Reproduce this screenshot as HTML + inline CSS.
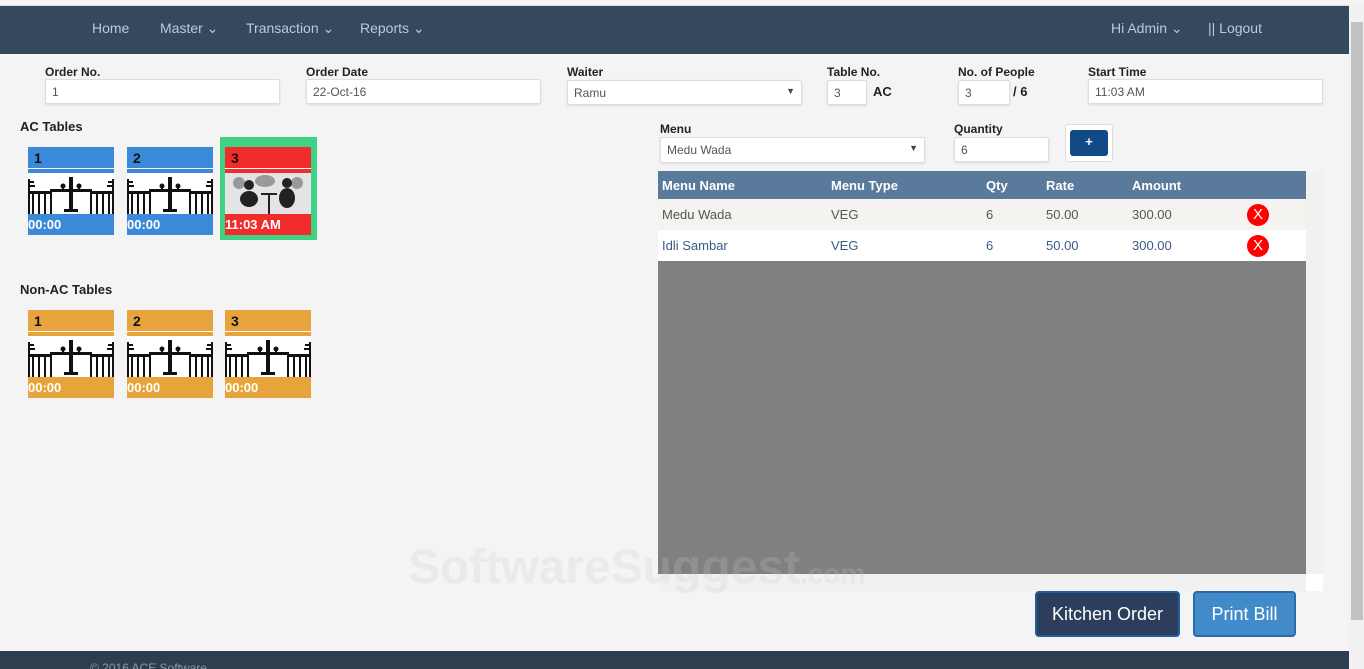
<!DOCTYPE html>
<html style="overflow:hidden"><head><meta charset="utf-8"><style>
*{box-sizing:border-box;margin:0;padding:0}
body{width:1364px;height:669px;overflow:hidden;background:#f4f4f4;font-family:"Liberation Sans",sans-serif;position:relative;font-size:13px;color:#333}
.a{position:absolute}
.nav{left:0;top:5px;width:1349px;height:49px;background:#34495e;border-top:1px solid #ddd}
.nav span{position:absolute;top:14px;color:#b9cbdc;font-size:14px}
.lbl{font-size:12px;font-weight:bold;color:#222}
.inp{background:#fff;border:1px solid #ddd;border-radius:2px;height:25px;font-size:12px;color:#555;padding:5px 6px;box-shadow:0 1px 2px rgba(0,0,0,.1)}
.tile{width:86px;height:88px;overflow:hidden}
.tile .h{height:21px;font-weight:bold;font-size:14px;padding:3px 6px;color:#111}
.tile .ln{height:1px;background:#fff}
.tile .g{height:4px}
.tile .img{height:41px;background:#fff;overflow:hidden}
.tile .f{height:21px;color:#fff;font-weight:bold;font-size:13px;padding:3px 0}
.blue{background:#3b89d9}.org{background:#e8a43c}.red{background:#f22b2b}
table{border-collapse:collapse;width:648px;font-size:13px}
th{background:#5a7a9c;color:#fff;text-align:left;height:28px;padding-left:4px;font-size:13px}
td{height:31px;padding-left:4px}
.x{width:22px;height:22px;border-radius:50%;background:#f00;color:#fff;text-align:center;line-height:22px;font-size:15px}
</style></head><body>
<svg width="0" height="0" style="position:absolute"><defs><g id="tb"><g fill="#111"><path d="M0 6h2v35H0zM0 18h24v3H0zM4 21h2v20H4zM10 21h2v20h-2zM16 21h2v20h-2zM22 18h2v23h-2zM2 8h4v2H2zM2 12h5v2H2z"/><path d="M84 6h2v35h-2zM62 18h24v3H62zM80 21h2v20h-2zM74 21h2v20h-2zM68 21h2v20h-2zM62 18h2v23h-2zM80 8h4v2h-4zM79 12h5v2h-5z"/><path d="M22 16h42v3H22zM41 4h4v32h-4zM36 36h14v3H36z"/><circle cx="35" cy="13" r="2.5"/><circle cx="51" cy="13" r="2.5"/><path d="M34 13h2v4h-2zM50 13h2v4h-2z"/></g></g></defs></svg>
<div class="a nav">
<span style="left:92px">Home</span><span style="left:160px">Master ⌄</span><span style="left:246px">Transaction ⌄</span><span style="left:360px">Reports ⌄</span>
<span style="left:1111px">Hi Admin ⌄</span><span style="left:1208px">|| Logout</span>
</div>
<div class="a" style="left:1349px;top:5px;width:15px;height:664px;background:#f1f1f1"></div>
<div class="a" style="left:1351px;top:22px;width:12px;height:598px;background:#c1c1c1"></div>

<div class="a lbl" style="left:45px;top:65px">Order No.</div><div class="a inp" style="left:45px;top:79px;width:235px">1</div>
<div class="a lbl" style="left:306px;top:65px">Order Date</div><div class="a inp" style="left:306px;top:79px;width:235px">22-Oct-16</div>
<div class="a lbl" style="left:567px;top:65px">Waiter</div><div class="a inp" style="left:567px;top:80px;width:235px">Ramu<span style="float:right;font-size:9px;color:#444">▼</span></div>
<div class="a lbl" style="left:827px;top:65px">Table No.</div><div class="a inp" style="left:827px;top:80px;width:40px">3</div><div class="a lbl" style="left:873px;top:84px;font-size:13px">AC</div>
<div class="a lbl" style="left:958px;top:65px">No. of People</div><div class="a inp" style="left:958px;top:80px;width:52px">3</div><div class="a lbl" style="left:1013px;top:84px;font-size:13px">/ 6</div>
<div class="a lbl" style="left:1088px;top:65px">Start Time</div><div class="a inp" style="left:1088px;top:79px;width:235px">11:03 AM</div>

<div class="a lbl" style="left:20px;top:119px;font-size:13px">AC Tables</div>
<div class="a" style="left:220px;top:137px;width:97px;height:103px;background:#3fd184"></div>
<div class="a tile" style="left:28px;top:147px"><div class="h blue">1</div><div class="ln"></div><div class="g blue"></div><div class="img"><svg width="86" height="41"><use href="#tb"/></svg></div><div class="f blue">00:00</div></div>
<div class="a tile" style="left:127px;top:147px"><div class="h blue">2</div><div class="ln"></div><div class="g blue"></div><div class="img"><svg width="86" height="41"><use href="#tb"/></svg></div><div class="f blue">00:00</div></div>
<div class="a tile" style="left:225px;top:147px"><div class="h red">3</div><div class="ln"></div><div class="g red"></div><div class="img" style="background:#e4e4e4"><svg width="86" height="41"><g fill="#999"><circle cx="14" cy="10" r="6"/><circle cx="72" cy="10" r="6"/><ellipse cx="40" cy="8" rx="10" ry="6"/></g><g fill="#222"><circle cx="24" cy="12" r="5"/><ellipse cx="24" cy="26" rx="9" ry="8"/><circle cx="62" cy="10" r="5"/><ellipse cx="62" cy="25" rx="8" ry="10"/><rect x="36" y="20" width="16" height="2"/><rect x="43" y="20" width="2" height="21"/></g></svg></div><div class="f red">11:03 AM</div></div>

<div class="a lbl" style="left:20px;top:282px;font-size:13px">Non-AC Tables</div>
<div class="a tile" style="left:28px;top:310px"><div class="h org">1</div><div class="ln"></div><div class="g org"></div><div class="img"><svg width="86" height="41"><use href="#tb"/></svg></div><div class="f org">00:00</div></div>
<div class="a tile" style="left:127px;top:310px"><div class="h org">2</div><div class="ln"></div><div class="g org"></div><div class="img"><svg width="86" height="41"><use href="#tb"/></svg></div><div class="f org">00:00</div></div>
<div class="a tile" style="left:225px;top:310px"><div class="h org">3</div><div class="ln"></div><div class="g org"></div><div class="img"><svg width="86" height="41"><use href="#tb"/></svg></div><div class="f org">00:00</div></div>

<div class="a lbl" style="left:660px;top:122px">Menu</div><div class="a inp" style="left:660px;top:137px;width:265px;height:26px">Medu Wada<span style="float:right;font-size:9px;color:#444">▼</span></div>
<div class="a lbl" style="left:954px;top:122px">Quantity</div><div class="a inp" style="left:954px;top:137px;width:95px">6</div>
<div class="a" style="left:1065px;top:124px;width:48px;height:38px;background:#fff;border:1px solid #ddd;border-radius:3px"><div style="margin:5px 0 0 4px;width:38px;height:26px;background:#114a86;border-radius:3px;color:#fff;text-align:center;font-weight:bold;line-height:24px">+</div></div>

<div class="a" style="left:658px;top:171px;width:648px;height:403px;background:#808080">
<table><tr><th style="width:169px">Menu Name</th><th style="width:155px">Menu Type</th><th style="width:60px">Qty</th><th style="width:86px">Rate</th><th style="width:115px">Amount</th><th></th></tr>
<tr style="background:#f4f3f0;color:#555"><td>Medu Wada</td><td>VEG</td><td>6</td><td>50.00</td><td>300.00</td><td><div class="x">X</div></td></tr>
<tr style="background:#fff;color:#3a5a86"><td>Idli Sambar</td><td>VEG</td><td>6</td><td>50.00</td><td>300.00</td><td><div class="x">X</div></td></tr></table>
</div>
<div class="a" style="left:1306px;top:171px;width:17px;height:420px;background:#f1f1f1"></div>
<div class="a" style="left:658px;top:574px;width:648px;height:17px;background:#f1f1f1"></div>
<div class="a" style="left:1306px;top:574px;width:17px;height:17px;background:#fff"></div>
<div class="a" style="left:408px;top:540px;font-size:48px;font-weight:bold;color:rgba(200,200,200,.22)">SoftwareSuggest<span style="font-size:28px">.com</span></div>

<div class="a" style="left:1035px;top:591px;width:145px;height:46px;background:#2c3e5c;border:2px solid #1e5fa0;border-radius:4px;color:#fff;font-size:18px;text-align:center;line-height:42px">Kitchen Order</div>
<div class="a" style="left:1193px;top:591px;width:103px;height:46px;background:#428bca;border:2px solid #2a6aa8;border-radius:4px;color:#fff;font-size:18px;text-align:center;line-height:42px">Print Bill</div>

<div class="a" style="left:0;top:651px;width:1349px;height:18px;background:#2c3e50;overflow:hidden;color:#8899aa;font-size:12px;padding:10px 0 0 90px">© 2016 ACE Software</div>
</body></html>
